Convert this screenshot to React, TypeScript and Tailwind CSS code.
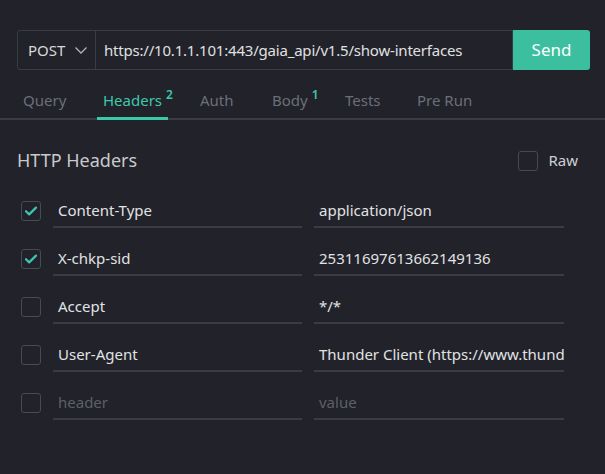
const tabs = [
  { name: "Query", badge: "", active: false, w: "w-[80px]" },
  { name: "Headers", badge: "2", active: true, w: "w-[97px]" },
  { name: "Auth", badge: "", active: false, w: "w-[72px]" },
  { name: "Body", badge: "1", active: false, w: "w-[73px]" },
  { name: "Tests", badge: "", active: false, w: "w-[72px]" },
  { name: "Pre Run", badge: "", active: false, w: "w-[80px]" },
];

type Header = { key: string; value: string; checked: boolean; placeholder?: boolean };

const headers: Header[] = [
  { key: "Content-Type", value: "application/json", checked: true },
  { key: "X-chkp-sid", value: "25311697613662149136", checked: true },
  { key: "Accept", value: "*/*", checked: false },
  { key: "User-Agent", value: "Thunder Client (https://www.thunderclient.com)", checked: false },
  { key: "header", value: "value", checked: false, placeholder: true },
];

function Checkbox({ checked }: { checked: boolean }) {
  return (
    <div className="w-5 h-5 rounded-[3px] border border-[#474a54] flex items-center justify-center shrink-0">
      {checked && (
        <svg width="14" height="14" viewBox="0 0 14 14" fill="none">
          <path d="M2 7.2l3.2 3.2L12 3.6" stroke="#3cc6b0" strokeWidth="2.2" strokeLinecap="round" strokeLinejoin="round" />
        </svg>
      )}
    </div>
  );
}

export default function App() {
  return (
    <div
      className="w-[605px] h-[474px] bg-[#21222a] text-[#d4d4d4] overflow-hidden"
      style={{ fontFamily: '"Noto Sans", "Open Sans", sans-serif' }}
    >
      {/* Start: Url bar */}
      <div className="pt-[30px] pl-[17px] flex">
        <div className="flex h-10 w-[496px] border border-[#3a3c45] rounded-l-[3px]">
          <div className="w-[78px] flex items-center pl-[10px] gap-[9px] border-r border-[#3a3c45] text-[15px] text-[#d8d8d8]">
            POST
            <svg width="14" height="9" viewBox="0 0 14 9" fill="none">
              <path d="M1.5 1.5l5.5 5.5 5.5-5.5" stroke="#b0b2b8" strokeWidth="1.3" />
            </svg>
          </div>
          <div className="flex-1 flex items-center pl-[8px] text-[15px] text-[#e0e0e0] tracking-[-0.2px] whitespace-nowrap">
            https://10.1.1.101:443/gaia_api/v1.5/show-interfaces
          </div>
        </div>
        <div className="w-[77px] h-10 bg-[#3bbf9f] rounded-r-[3px] flex items-center justify-center text-[17px] text-white">
          Send
        </div>
      </div>
      {/* End: Url bar */}

      {/* Start: Tabs */}
      <div className="mt-[16px] flex pl-[17px] border-b-2 border-[#3a3c45] h-[34px] pt-[3px]">
        {tabs.map((t) => (
          <div key={t.name} className={`${t.w} relative flex items-start`}>
            <div className={`flex items-start text-[15px] pl-[6px] ${t.active ? "text-[#3cc9aa]" : "text-[#6c6f79]"}`}>
              <span>{t.name}</span>
              {t.badge && <span className="text-[12px] ml-[4px] -mt-[3px] text-[#3cc9aa] font-semibold">{t.badge}</span>}
            </div>
            {t.active && <div className="absolute -bottom-[2px] left-0 w-[71px] h-[3px] bg-[#3cc9aa]" />}
          </div>
        ))}
      </div>
      {/* End: Tabs */}

      {/* Start: Headers */}
      <div className="px-[17px] pt-[27px]">
        <div className="flex items-center justify-between pr-[10px]">
          <div className="text-[18px] text-[#c9c9cc]">HTTP Headers</div>
          <div className="flex items-center gap-[10px]">
            <Checkbox checked={false} />
            <span className="text-[15px] text-[#cfd0d4]">Raw</span>
          </div>
        </div>

        <div className="mt-[20px] flex flex-col gap-[14px]">
          {headers.map((h) => (
            <div key={h.key} className="flex items-center h-[34px]">
              <div className="w-[36px] pl-[4px]">
                <Checkbox checked={h.checked} />
              </div>
              <div
                className={`w-[249px] h-[34px] border-b-2 border-[#3a3c45] flex items-center pl-[5px] text-[15px] ${
                  h.placeholder ? "text-[#5d6069]" : "text-[#e2e2e4]"
                }`}
              >
                {h.key}
              </div>
              <div
                className={`ml-[12px] w-[250px] h-[34px] border-b-2 border-[#3a3c45] flex items-center pl-[5px] text-[15px] whitespace-nowrap overflow-hidden ${
                  h.placeholder ? "text-[#5d6069]" : "text-[#e2e2e4]"
                }`}
              >
                {h.value}
              </div>
            </div>
          ))}
        </div>
      </div>
      {/* End: Headers */}
    </div>
  );
}
